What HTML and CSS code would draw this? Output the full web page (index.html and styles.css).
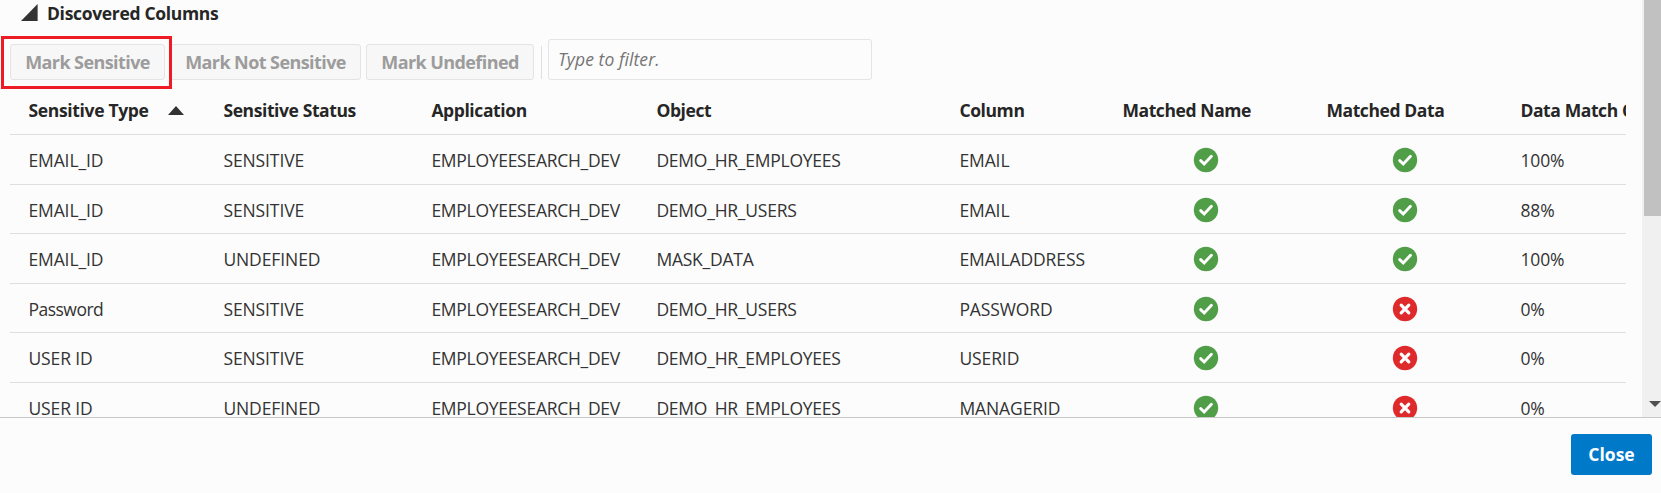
FILE: index.html
```html
<!DOCTYPE html>
<html lang="en">
<head>
<meta charset="utf-8">
<title>Discovered Columns</title>
<link rel="stylesheet" href="styles.css">
</head>
<body>
<svg width="0" height="0" class="defs" aria-hidden="true">
  <symbol id="ok" viewBox="0 0 26 26"><circle cx="13" cy="13" r="12.2" fill="#509e47"/><path d="M7.7 13.6 11.2 17 18.4 9.3" fill="none" stroke="#fff" stroke-width="2.9" stroke-linecap="round"/></symbol>
  <symbol id="no" viewBox="0 0 26 26"><circle cx="13" cy="13" r="12.2" fill="#df2a2c"/><path d="M9.2 9.2 16.8 16.8M16.8 9.2 9.2 16.8" stroke="#fff" stroke-width="3.2" stroke-linecap="round"/></symbol>
</svg>
<div class="dialog">
  <div class="body">
    <main class="content">
      <h2 class="title"><svg class="disclose" width="17" height="17" viewBox="0 0 17 17"><path d="M0 17 16.6 0V17Z" fill="#333"/></svg><span class="heading">Discovered Columns</span></h2>
      <div class="toolbar">
        <button class="btn mark"><span>Mark Sensitive</span></button>
        <button class="btn unmark"><span>Mark Not Sensitive</span></button>
        <button class="btn undef"><span>Mark Undefined</span></button>
        <i class="divider"></i>
        <div class="filter"><span>Type to filter.</span></div>
      </div>
      <div class="table">
        <div class="row head"><b class="type">Sensitive Type<svg class="sort" width="16" height="9" viewBox="0 0 16 9"><path d="M0 9 8 0 16 9Z" fill="#333"/></svg></b><b>Sensitive Status</b><b>Application</b><b>Object</b><b>Column</b><b>Matched Name</b><b>Matched Data</b><b>Data Match Count</b></div>
        <div class="row"><span>EMAIL_ID</span><span>SENSITIVE</span><span class="app">EMPLOYEESEARCH_DEV</span><span class="obj">DEMO_HR_EMPLOYEES</span><span>EMAIL</span><span class="flag"><svg><use href="#ok"/></svg></span><span class="flag"><svg><use href="#ok"/></svg></span><span>100%</span></div>
        <div class="row"><span>EMAIL_ID</span><span>SENSITIVE</span><span class="app">EMPLOYEESEARCH_DEV</span><span class="obj">DEMO_HR_USERS</span><span>EMAIL</span><span class="flag"><svg><use href="#ok"/></svg></span><span class="flag"><svg><use href="#ok"/></svg></span><span>88%</span></div>
        <div class="row"><span>EMAIL_ID</span><span>UNDEFINED</span><span class="app">EMPLOYEESEARCH_DEV</span><span class="obj">MASK_DATA</span><span>EMAILADDRESS</span><span class="flag"><svg><use href="#ok"/></svg></span><span class="flag"><svg><use href="#ok"/></svg></span><span>100%</span></div>
        <div class="row"><span class="lower">Password</span><span>SENSITIVE</span><span class="app">EMPLOYEESEARCH_DEV</span><span class="obj">DEMO_HR_USERS</span><span>PASSWORD</span><span class="flag"><svg><use href="#ok"/></svg></span><span class="flag"><svg><use href="#no"/></svg></span><span>0%</span></div>
        <div class="row"><span>USER ID</span><span>SENSITIVE</span><span class="app">EMPLOYEESEARCH_DEV</span><span class="obj">DEMO_HR_EMPLOYEES</span><span>USERID</span><span class="flag"><svg><use href="#ok"/></svg></span><span class="flag"><svg><use href="#no"/></svg></span><span>0%</span></div>
        <div class="row"><span>USER ID</span><span>UNDEFINED</span><span class="app">EMPLOYEESEARCH_DEV</span><span class="obj">DEMO_HR_EMPLOYEES</span><span>MANAGERID</span><span class="flag"><svg><use href="#ok"/></svg></span><span class="flag"><svg><use href="#no"/></svg></span><span>0%</span></div>
      </div>
    </main>
    <div class="scrollbar"><div class="thumb"></div><svg class="down" width="12" height="6" viewBox="0 0 12 6"><path d="M0 0H12L6 6Z" fill="#505050"/></svg></div>
  </div>
  <footer class="footer"><button class="close"><span>Close</span></button></footer>
</div>
</body>
</html>
```
FILE: styles.css
```css
* { box-sizing: border-box; }
html { height: 493px; overflow: hidden; }
body { margin: 0; height: 493px; background: #fcfcfc; color: #333; font-family: "Open Sans", "Noto Sans", sans-serif; font-size: 17.5px; overflow: hidden; }
.defs { position: absolute; }
.dialog { display: flex; flex-direction: column; width: 1661px; height: 493px; }
.body { display: flex; height: 417px; overflow: hidden; }
.content { width: 1642px; padding-left: 10px; flex: none; }
.title { margin: 0; height: 39px; padding: 0 0 0 11px; display: flex; align-items: flex-start; font-size: 17.5px; line-height: 27px; color: #262626; }
.disclose { margin: 4px 9px 0 0; }
.heading { letter-spacing: -0.33px; }
.toolbar { display: flex; height: 46px; align-items: flex-start; }
.btn { margin: 5px 5px 0 0; padding: 0; height: 36px; border: 1px solid #e4e4e4; border-radius: 3px; background: #f7f7f7; color: #9c9c9c; font: 700 18px/34px "Open Sans", sans-serif; letter-spacing: -0.58px; white-space: nowrap; }
.mark { width: 155px; position: relative; z-index: 1; }
.mark::after { content: ""; position: absolute; inset: -9px -8px -10px -10px; border: 3px solid #ed1c24; }
.unmark { width: 191px; }
.undef { width: 168px; }
.divider { width: 1px; height: 33px; background: #dfdfdf; margin: 7px 6px 0 2px; }
.filter { width: 324px; height: 41px; border: 1px solid #e4e4e4; border-radius: 3px; padding-left: 9px; color: #757575; font-style: italic; line-height: 39px; letter-spacing: 0.08px; }
.table { width: 1616px; overflow: hidden; }
.row { display: grid; grid-template-columns: 195px 208px 225px 303px 163px 204px 194px 250px; height: 50px; width: 1742px; border-bottom: 1px solid #dfdfdf; line-height: 51px; white-space: nowrap; letter-spacing: -0.1px; }
.row:nth-child(odd) { height: 49px; }
.row > * { padding-left: 18.4px; }
.row.head { height: 50px; color: #262626; letter-spacing: -0.4px; }
.row > .type { display: flex; letter-spacing: -0.33px; }
.app { letter-spacing: -0.28px; }
.obj { letter-spacing: -0.24px; }
.lower { letter-spacing: -0.5px; }
.flag { display: flex; justify-content: center; padding: 11.5px 0 0; }
.row > .flag { padding-left: 0; }
.flag svg { width: 26px; height: 26px; }
.sort { margin: 21px 0 0 19px; }
.scrollbar { width: 19px; background: #f0f0f0; display: flex; flex-direction: column; justify-content: space-between; padding-left: 2px; }
.thumb { height: 216px; background: #c1c1c1; }
.down { margin: 0 0 10px 5px; }
.footer { height: 76px; border-top: 1px solid #c8c8c8; display: flex; justify-content: flex-end; padding: 16px 9px 0 0; }
.close { width: 81px; height: 41px; padding: 0; border: 0; border-radius: 3px; background: #0079c8; color: #fff; font: 700 17.5px/41px "Open Sans", sans-serif; }
```
